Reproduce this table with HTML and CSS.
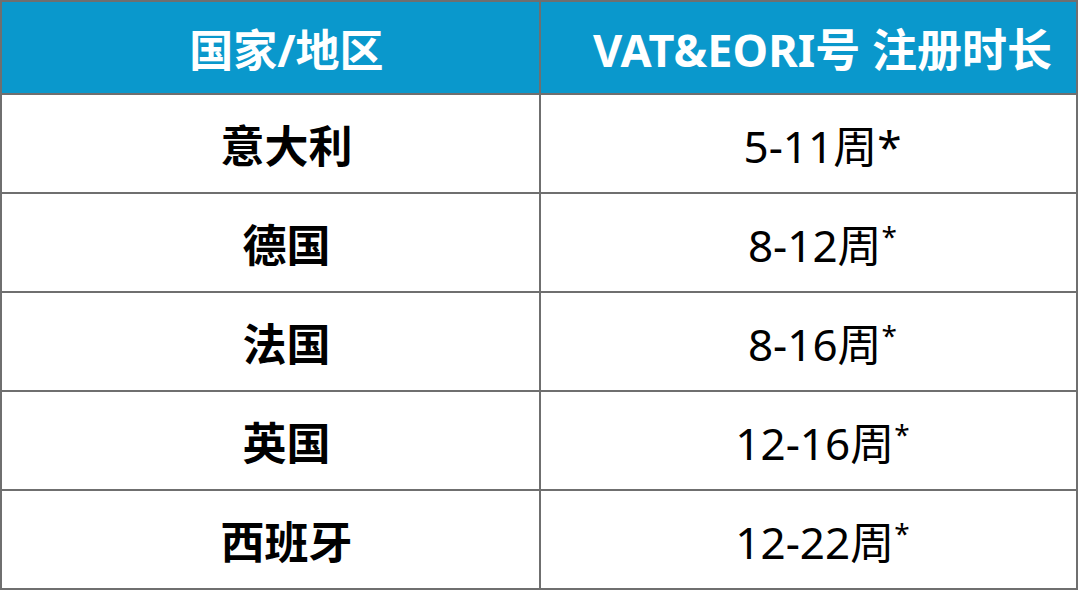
FILE: index.html
```html
<!DOCTYPE html>
<html lang="zh">
<head>
<meta charset="utf-8">
<link rel="stylesheet" href="styles.css">
</head>
<body>
<table class="vat-table">
  <thead>
    <tr>
      <th class="col-country">国家/地区</th>
      <th class="col-time">VAT&amp;EORI号 注册时长</th>
    </tr>
  </thead>
  <tbody>
    <tr><td class="country">意大利</td><td class="time">5-11周*</td></tr>
    <tr><td class="country">德国</td><td class="time">8-12周<sup>*</sup></td></tr>
    <tr><td class="country">法国</td><td class="time">8-16周<sup>*</sup></td></tr>
    <tr><td class="country">英国</td><td class="time">12-16周<sup>*</sup></td></tr>
    <tr><td class="country">西班牙</td><td class="time">12-22周<sup>*</sup></td></tr>
  </tbody>
</table>
</body>
</html>
```

FILE: styles.css
```css
html, body {
  margin: 0;
  padding: 0;
  background: #ffffff;
}
body {
  width: 1080px;
  height: 593px;
  overflow: hidden;
  font-family: "Noto Sans", "Noto Sans CJK SC", sans-serif;
}
.vat-table {
  border-collapse: collapse;
  width: 1078px;
  margin: 0;
  table-layout: fixed;
}
.vat-table th,
.vat-table td {
  border: 2px solid #6f6f6f;
  text-align: center;
  padding: 0;
  box-sizing: border-box;
}
.vat-table th {
  background: #0a98cc;
  color: #ffffff;
  font-weight: 700;
  font-size: 44px;
  height: 93px;
  font-family: "Noto Sans", "Noto Sans CJK SC", sans-serif;
}
.col-country {
  width: 539px;
}
.vat-table th.col-country {
  padding-left: 32px;
}
.vat-table th.col-time {
  padding-left: 28px;
  font-size: 45px;
}
.vat-table td {
  height: 99px;
  color: #000000;
}
.vat-table td.country {
  font-weight: 700;
  font-size: 44px;
  font-family: "Noto Sans CJK SC", sans-serif;
  padding-left: 32px;
}
.vat-table td.time {
  font-size: 44px;
  padding-left: 28px;
}
.time sup {
  font-size: 28px;
  vertical-align: 15px;
  line-height: 0;
}
```
